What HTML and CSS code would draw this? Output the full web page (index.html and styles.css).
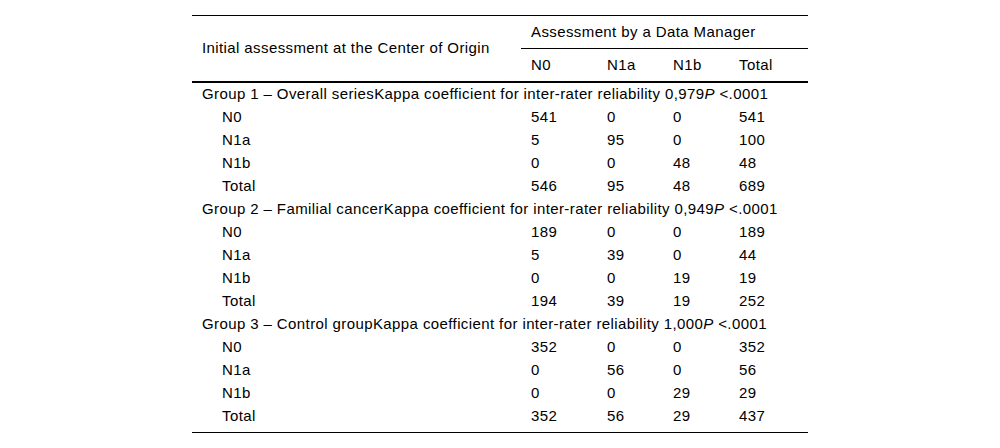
FILE: index.html
```html
<!DOCTYPE html>
<html>
<head>
<meta charset="utf-8">
<link rel="stylesheet" href="styles.css">
</head>
<body>
<div class="wrap">
<table class="tbl">
<colgroup>
<col class="c-label"><col class="c-n0"><col class="c-n1a"><col class="c-n1b"><col class="c-tot">
</colgroup>
<thead>
<tr class="h1">
<th rowspan="2" class="lab">Initial assessment at the Center of Origin</th>
<th colspan="4" class="span">Assessment by a Data Manager</th>
</tr>
<tr class="h2">
<th>N0</th><th>N1a</th><th>N1b</th><th>Total</th>
</tr>
</thead>
<tbody>
<tr><td colspan="5" class="grp">Group 1 – Overall seriesKappa coefficient for inter-rater reliability 0,979<i>P</i> &lt;.0001</td></tr>
<tr><td class="ind">N0</td><td>541</td><td>0</td><td>0</td><td>541</td></tr>
<tr><td class="ind">N1a</td><td>5</td><td>95</td><td>0</td><td>100</td></tr>
<tr><td class="ind">N1b</td><td>0</td><td>0</td><td>48</td><td>48</td></tr>
<tr><td class="ind">Total</td><td>546</td><td>95</td><td>48</td><td>689</td></tr>
<tr><td colspan="5" class="grp">Group 2 – Familial cancerKappa coefficient for inter-rater reliability 0,949<i>P</i> &lt;.0001</td></tr>
<tr><td class="ind">N0</td><td>189</td><td>0</td><td>0</td><td>189</td></tr>
<tr><td class="ind">N1a</td><td>5</td><td>39</td><td>0</td><td>44</td></tr>
<tr><td class="ind">N1b</td><td>0</td><td>0</td><td>19</td><td>19</td></tr>
<tr><td class="ind">Total</td><td>194</td><td>39</td><td>19</td><td>252</td></tr>
<tr><td colspan="5" class="grp">Group 3 – Control groupKappa coefficient for inter-rater reliability 1,000<i>P</i> &lt;.0001</td></tr>
<tr><td class="ind">N0</td><td>352</td><td>0</td><td>0</td><td>352</td></tr>
<tr><td class="ind">N1a</td><td>0</td><td>56</td><td>0</td><td>56</td></tr>
<tr><td class="ind">N1b</td><td>0</td><td>0</td><td>29</td><td>29</td></tr>
<tr class="last"><td class="ind">Total</td><td>352</td><td>56</td><td>29</td><td>437</td></tr>
</tbody>
</table>
</div>
</body>
</html>
```
FILE: styles.css
```css
html, body {
  margin: 0;
  padding: 0;
  background: #fff;
}
body {
  font-family: "Liberation Sans", Arial, sans-serif;
  font-size: 15px;
  letter-spacing: 0.4px;
  color: #000;
}
.wrap {
  padding-top: 15px;
  display: flex;
  justify-content: center;
}
.tbl {
  width: 616px;
  border-collapse: collapse;
  table-layout: fixed;
  border-top: 1px solid #000;
  border-bottom: 1px solid #000;
}
.c-label { width: 329px; }
.c-n0 { width: 76px; }
.c-n1a { width: 66px; }
.c-n1b { width: 66px; }
.c-tot { width: 79px; }
th, td {
  text-align: left;
  font-weight: normal;
  padding: 0 0 2px 10px;
  line-height: 17px;
  white-space: nowrap;
  vertical-align: middle;
}
thead .h1 th { height: 30px; }
thead .h2 th { height: 30px; }
thead th.span { border-bottom: 1px solid #000; }
thead .h2 th { border-bottom: 2px solid #000; }
thead th.lab { border-bottom: 2px solid #000; }
tbody td { height: 21px; }
tbody td.ind { padding-left: 30px; }
tbody tr.last td { height: 24px; vertical-align: top; padding-top: 2px; padding-bottom: 1px; }
```
